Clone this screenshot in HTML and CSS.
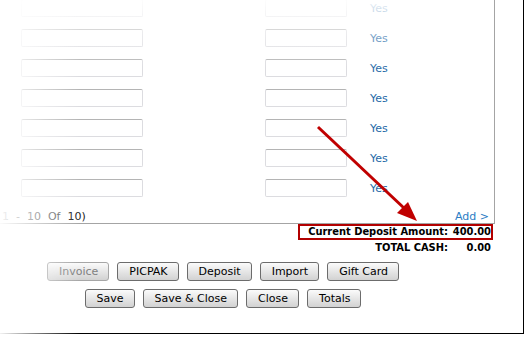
FILE: index.html
```html
<!DOCTYPE html>
<html lang="en">
<head>
    <meta charset="UTF-8">
    <title>Deposit</title>
    <link rel="stylesheet" href="styles.css">
</head>
<body>
<div class="frame">
    <div class="grid">
        <div class="rows">
            <div class="row"><input class="field wide" type="text"><input class="field narrow" type="text"><span class="flag">Yes</span></div>
            <div class="row"><input class="field wide" type="text"><input class="field narrow" type="text"><span class="flag">Yes</span></div>
            <div class="row"><input class="field wide" type="text"><input class="field narrow" type="text"><span class="flag">Yes</span></div>
            <div class="row"><input class="field wide" type="text"><input class="field narrow" type="text"><span class="flag">Yes</span></div>
            <div class="row"><input class="field wide" type="text"><input class="field narrow" type="text"><span class="flag">Yes</span></div>
            <div class="row"><input class="field wide" type="text"><input class="field narrow" type="text"><span class="flag">Yes</span></div>
            <div class="row"><input class="field wide" type="text"><input class="field narrow" type="text"><span class="flag">Yes</span></div>
        </div>
        <div class="pager">
            <span class="count">1&nbsp;&nbsp;-&nbsp;&nbsp;10&nbsp;&nbsp;Of&nbsp;&nbsp;<span class="last">10)</span></span>
            <a class="add">Add &gt;</a>
        </div>
    </div>

    <div class="totals">
        <div class="total highlight"><span class="label">Current Deposit Amount:</span><span class="value">400.00</span></div>
        <div class="total"><span class="label">TOTAL CASH:</span><span class="value">0.00</span></div>
    </div>

    <div class="actions">
        <div class="btn-row">
            <button class="btn disabled">Invoice</button>
            <button class="btn">PICPAK</button>
            <button class="btn">Deposit</button>
            <button class="btn">Import</button>
            <button class="btn">Gift Card</button>
        </div>
        <div class="btn-row">
            <button class="btn">Save</button>
            <button class="btn">Save &amp; Close</button>
            <button class="btn">Close</button>
            <button class="btn">Totals</button>
        </div>
    </div>

    <!-- annotation arrow -->
    <svg class="pointer" width="528" height="340" viewBox="0 0 528 340">
        <line x1="318" y1="128" x2="405" y2="210" stroke="#c00000" stroke-width="3"/>
        <polygon points="417,222 397,214 408,203" fill="#c00000"/>
    </svg>

    <div class="fade-top"></div>
    <div class="fade-left"></div>
</div>
</body>
</html>
```

FILE: styles.css
```css
* {
    margin: 0;
    padding: 0;
    box-sizing: border-box;
}

body {
    background: #fff;
    font: 11px "DejaVu Sans", Verdana, sans-serif;
    color: #000;
}

.frame {
    position: relative;
    width: 524px;
    height: 335px;
    border-right: 1px solid #000;
    border-bottom: 1px solid #000;
}

.grid {
    width: 495px;
    height: 225px;
    border-right: 1px solid #a4a4a4;
    border-bottom: 1px solid #a4a4a4;
}

.rows {
    margin-top: -1px;
}

.row {
    display: flex;
    align-items: flex-start;
    height: 30px;
    padding-left: 21px;
}

.field {
    height: 18px;
    border: 1px solid #dcdce0;
    border-top-color: #b4b4b4;
    border-radius: 2px;
    background: #fff;
}

.field.wide {
    width: 122px;
}

.field.narrow {
    width: 82px;
    margin-left: 122px;
}

.flag {
    margin-left: 23px;
    line-height: 19px;
    color: #1d67a6;
}

.pager {
    display: flex;
    justify-content: space-between;
    height: 15px;
    line-height: 15px;
    padding: 0 5px 0 2px;
    color: #555;
}

.pager .last {
    color: #222;
}

.add {
    color: #2b7cc4;
}

.totals {
    display: flex;
    flex-direction: column;
    align-items: flex-end;
    padding-right: 30px;
}

.total {
    display: flex;
    border: 2px solid transparent;
    padding-left: 2px;
    line-height: 12px;
    font-family: "DejaVu Sans Condensed", "DejaVu Sans", sans-serif;
    font-weight: bold;
    white-space: nowrap;
}

.total.highlight {
    border-color: #b20000;
}

.total .label {
    width: 146px;
    text-align: right;
}

.total .value {
    width: 43px;
    text-align: right;
}

.actions {
    display: flex;
    flex-direction: column;
    align-items: center;
    gap: 8px;
    width: 446px;
    margin-top: 6px;
}

.btn-row {
    display: flex;
    gap: 8px;
}

.btn {
    height: 19px;
    padding: 0 10px 0 11px;
    border: 1px solid #6c6c6c;
    border-radius: 3px;
    background: linear-gradient(#fbfbfb, #e6e6e6 50%, #d2d2d2);
    font: inherit;
    line-height: 17px;
    color: #000;
}

.btn.disabled {
    color: #808080;
    border-color: #a6a6a6;
}

.pointer {
    position: absolute;
    left: 0;
    top: 0;
    pointer-events: none;
}

.fade-top {
    position: absolute;
    left: 0;
    top: 0;
    width: 494px;
    height: 72px;
    background: linear-gradient(rgba(255, 255, 255, 0.95), rgba(255, 255, 255, 0.45) 45%, rgba(255, 255, 255, 0));
    pointer-events: none;
}

.fade-left {
    position: absolute;
    left: 0;
    top: 0;
    width: 80px;
    height: 336px;
    background: linear-gradient(to right, rgba(255, 255, 255, 0.95), rgba(255, 255, 255, 0.5) 45%, rgba(255, 255, 255, 0));
    pointer-events: none;
}
```
